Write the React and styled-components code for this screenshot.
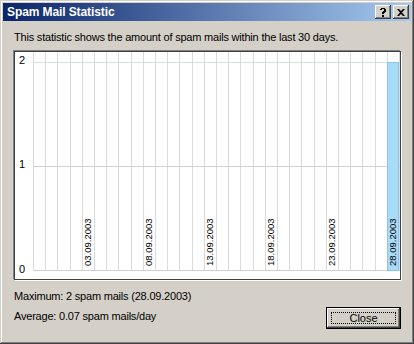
import React from 'react';
import styled, { createGlobalStyle } from 'styled-components';

const Global = createGlobalStyle`
  html, body { margin: 0; padding: 0; background: #d4d0c8; }
  body {
    font-family: "Liberation Sans", Arial, sans-serif;
    font-size: 11px;
    letter-spacing: -0.2px;
    color: #000;
  }
`;

const Window = styled.div`
  width: 414px;
  height: 344px;
  box-sizing: border-box;
  padding: 3px;
  background: #d4d0c8;
  box-shadow: inset -1px -1px #404040, inset 1px 1px #d4d0c8,
    inset -2px -2px #808080, inset 2px 2px #fff;
  display: flex;
  flex-direction: column;
`;

const TitleBar = styled.div`
  height: 18px;
  display: flex;
  align-items: center;
  padding: 0 2px 0 4px;
  background: linear-gradient(to right, #0a246a, #a6caf0);
`;

const Title = styled.div`
  flex: 1;
  color: #fff;
  font-weight: bold;
  font-size: 12px;
  letter-spacing: -0.1px;
`;

const CaptionButton = styled.div`
  width: 16px;
  height: 14px;
  margin-left: ${p => (p.$gap ? '2px' : '0')};
  background: #d4d0c8;
  box-shadow: inset -1px -1px #404040, inset 1px 1px #fff,
    inset -2px -2px #808080;
  display: flex;
  align-items: center;
  justify-content: center;
`;

const Body = styled.div`
  flex: 1;
  display: flex;
  flex-direction: column;
  padding: 10px 10px 0 11px;
`;

const Intro = styled.div`
  line-height: 13px;
  height: 13px;
`;

const ChartBox = styled.div`
  margin-top: 7px;
  width: 387px;
  height: 229px;
  box-sizing: border-box;
  background: #fff;
  border: 1px solid #404040;
  box-shadow: -1px -1px #808080, 1px 1px #fff;
`;

const Footer = styled.div`
  display: flex;
  justify-content: space-between;
  margin-top: 10px;
`;

const Stats = styled.div`
  display: flex;
  flex-direction: column;
  gap: 7px;
  line-height: 13px;
`;

const Button = styled.button`
  align-self: flex-end;
  margin-top: 17px;
  width: 75px;
  height: 22px;
  padding: 4px;
  font: inherit;
  font-size: 11px;
  background: #d4d0c8;
  border: 1px solid #000;
  box-shadow: inset -1px -1px #404040, inset 1px 1px #fff,
    inset -2px -2px #808080;
  box-sizing: border-box;
`;

const Focus = styled.span`
  display: flex;
  align-items: center;
  justify-content: center;
  height: 100%;
  border: 1px dotted #000;
  box-sizing: border-box;
`;

const x0 = 18;
const colW = 12.2;
const cols = 30;
const yFor = v => 218 - v * 104;
const counts = Array.from({ length: cols }, (_, i) => (i === 29 ? 2 : 0));
const labels = ['03.09.2003', '08.09.2003', '13.09.2003', '18.09.2003', '23.09.2003', '28.09.2003'];
const chartFont = 'Liberation Sans, Arial, sans-serif';

function Chart() {
  return (
    <svg width="385" height="227" style={{ display: 'block', letterSpacing: 0 }}>
      {Array.from({ length: cols + 1 }, (_, i) => (
        <line key={i} x1={x0 + i * colW + 0.5} x2={x0 + i * colW + 0.5} y1="0" y2="218"
          stroke="#dadada" strokeWidth="1" shapeRendering="crispEdges" />
      ))}
      <line x1={x0} x2="385" y1={yFor(2) + 0.5} y2={yFor(2) + 0.5} stroke="#cfe3da" shapeRendering="crispEdges" />
      <line x1={x0} x2="385" y1={yFor(1) + 0.5} y2={yFor(1) + 0.5} stroke="#d0d0d0" shapeRendering="crispEdges" />
      <line x1={x0} x2="385" y1={218.5} y2={218.5} stroke="#d0d0d0" shapeRendering="crispEdges" />
      {counts.map((c, i) =>
        c > 0 ? (
          <rect key={i} x={Math.round(x0 + i * colW) + 0.5} y={yFor(c) + 0.5}
            width={Math.round(colW) - 1} height={218 - yFor(c)}
            fill="#a8dbf8" stroke="#86c6ee" shapeRendering="crispEdges" />
        ) : null
      )}
      {labels.map((l, k) => {
        const i = 4 + k * 5;
        const cx = Math.round(x0 + i * colW);
        const hasBar = counts[i] > 0;
        return (
          <g key={l}>
            {!hasBar && <rect x={cx + 1} y="166" width={Math.round(colW) - 1} height="52" fill="#fff" />}
            <text x={cx + 9} y="214" transform={`rotate(-90 ${cx + 9} 214)`}
              fontFamily={chartFont} fontSize="9.5" fill="#000">{l}</text>
          </g>
        );
      })}
      <text x="4" y="12" fontSize="11" fontFamily={chartFont} fill="#000">2</text>
      <text x="4" y="116" fontSize="11" fontFamily={chartFont} fill="#000">1</text>
      <text x="4" y="221" fontSize="11" fontFamily={chartFont} fill="#000">0</text>
    </svg>
  );
}

export default function App() {
  return (
    <>
      <Global />
      <Window>
        <TitleBar>
          <Title>Spam Mail Statistic</Title>
          <CaptionButton>
            <svg width="8" height="9" viewBox="0 0 8 9">
              <path d="M1 1h1V0h4v1h1v3H6v1H5v1H3V4h1V3h1V1H3v1H1z M3 7h2v2H3z" fill="#000" />
            </svg>
          </CaptionButton>
          <CaptionButton $gap>
            <svg width="8" height="7" viewBox="0 0 8 7">
              <path d="M0 0h2l2 2 2-2h2L5 3.5 8 7H6L4 5 2 7H0l3-3.5z" fill="#000" />
            </svg>
          </CaptionButton>
        </TitleBar>
        <Body>
          <Intro>This statistic shows the amount of spam mails within the last 30 days.</Intro>
          <ChartBox>
            <Chart />
          </ChartBox>
          <Footer>
            <Stats>
              <div>Maximum: 2 spam mails (28.09.2003)</div>
              <div>Average: 0.07 spam mails/day</div>
            </Stats>
            <Button><Focus>Close</Focus></Button>
          </Footer>
        </Body>
      </Window>
    </>
  );
}
